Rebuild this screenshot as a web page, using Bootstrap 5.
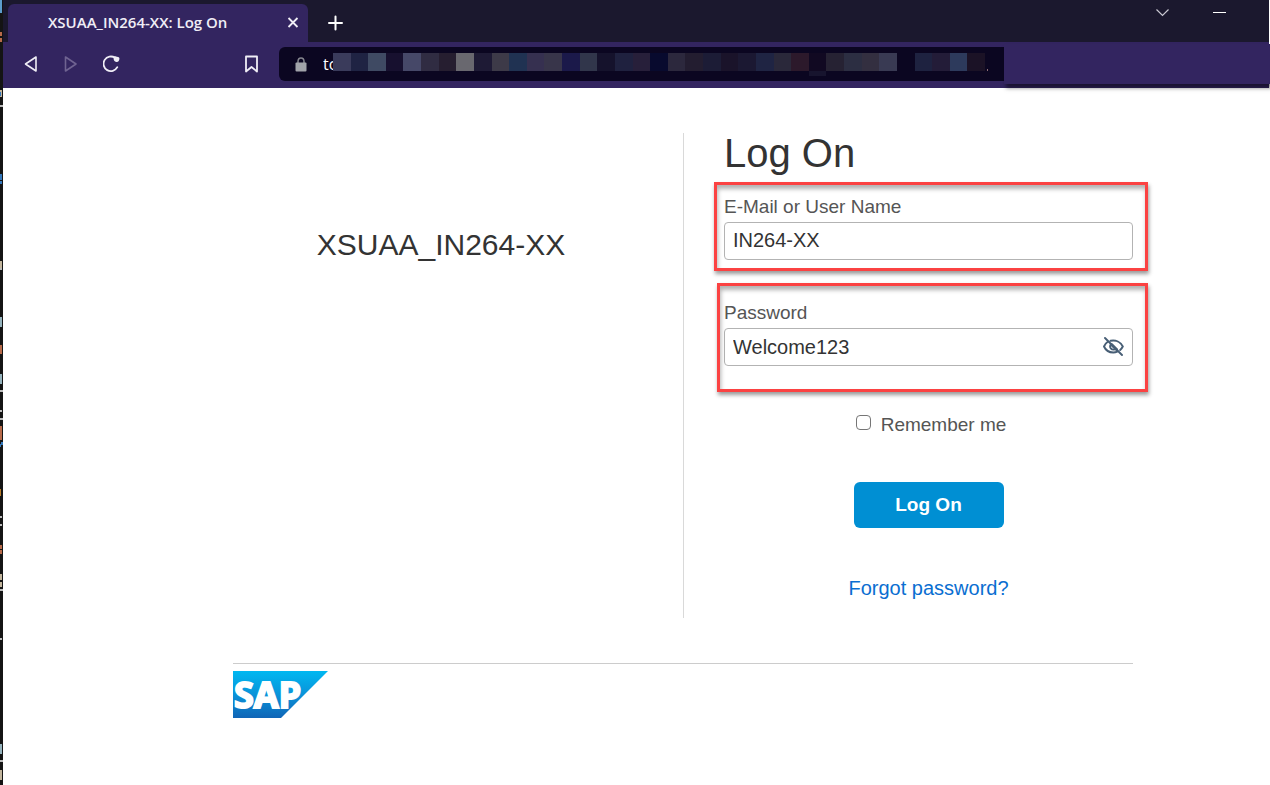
<!DOCTYPE html>
<html lang="en">
<head>
<meta charset="utf-8">
<meta name="viewport" content="width=device-width, initial-scale=1">
<title>XSUAA_IN264-XX: Log On</title>
<link rel="stylesheet" href="https://cdn.jsdelivr.net/npm/bootstrap@5.3.0/dist/css/bootstrap.min.css">
<style>
  body { font-family: "Liberation Sans", Arial, sans-serif; color: #333; background: #fff; }
  .editor-edge { width: 3px; background: #141414; }
  .editor-edge svg { display: block; }
  .browser-head { margin-right: 1px; }
  .tab-strip { height: 42px; background: #1b182e; padding-left: 5px; }
  .tab-item { width: 300px; height: 38px; background: #332560; color: #f0eef6; border-radius: 6px 6px 0 0;
    padding: 0 8px 2px 40px; font: 600 15px "Open Sans", "Noto Sans", sans-serif; }
  .icon-btn { border: 0; padding: 0; background: none; color: #f0eef6; display: block; line-height: 0; }
  .tool-strip { height: 46px; background: #332560; padding: 0 0 2px 20px; }
  .address { height: 34px; background: #0b0621; border-radius: 6px 0 0 6px; padding-left: 16px; padding-right: 19px; }
  .address input { width: 10px; border: 0; padding: 0; background: none; color: #fff; outline: 0;
    font: 16px "Open Sans", "Noto Sans", sans-serif; }
  .mosaic { height: 18px; margin-top: -4px; }
  .cover { width: 266px; height: 40px; margin-right: -1px; background: #332560; box-shadow: 2px 4px 4px rgba(0,0,0,.5); }
  .logon-page { padding: 45px 137px 0 230px; }
  .brand-side { padding-top: 92px; padding-right: 34px; }
  .brand-side h2 { font-size: 30px; line-height: 40px; }
  .form-side { border-left: 1px solid #d9d9d9; padding-left: 40px; padding-bottom: 18px; }
  .form-side h1 { font-size: 40px; line-height: 40px; margin-bottom: 21px; }
  .form-side label { font-size: 19px; line-height: 26px; color: #555; display: block; }
  .marked label { margin-bottom: 2px; }
  .entry { height: 38px; font-size: 20px; line-height: 24px; color: #333; border: 1px solid #b3b3b3; border-radius: 4px; padding: 0 8px 2px; }
  .entry-2 { padding-bottom: 0; }
  .marked::after { content: ""; position: absolute; border: 3px solid #fb4242; pointer-events: none;
    box-shadow: 1px 3px 4px rgba(0,0,0,.4), inset 1px 4px 4px rgba(0,0,0,.3); }
  .mark-user::after { inset: -12px -15px -11px -10px; }
  .mark-pass { margin-top: 40px; }
  .mark-pass::after { inset: -17px -15px -26px -7px; }
  .eye { right: 9px; bottom: 9px; color: #475e75; }
  .remember { margin: 46px 0 44px; padding-left: 5px; gap: 10px; }
  .remember input { width: 15px; height: 15px; margin: 0 0 6px; border: 1px solid #767676; border-radius: 3px; }
  .logon-btn { width: 150px; height: 46px; border: 0; border-radius: 6px; background: #008fd3; color: #fff; font-size: 19px; line-height: 24px; }
  .forgot { margin-top: 48px; font-size: 20px; line-height: 24px; color: #0a6ed1; }
  .logon-foot { margin-top: 45px; border-top: 1px solid #ccc; padding-top: 7px; }
</style>
</head>
<body>
<div class="d-flex min-vh-100">
  <div class="editor-edge flex-shrink-0" aria-hidden="true">
    <svg width="3" height="785" viewBox="0 0 3 785">
      <path fill="#5c9dcc" d="M0 0h2v13H0z"/>
      <path fill="#b76a4a" d="M0 32h2v4H0zM0 38h2v4H0zM0 345h2v9H0zM0 426h2v14H0zM0 545h2v4H0zM0 550h2v4H0z"/>
      <path fill="#c2b59d" d="M0 90h2v7H0zM0 261h2v8H0zM0 574h2v6H0zM0 582h2v5H0zM0 770h2v10H0z"/>
      <path fill="#3478bc" d="M0 92h1v4H0zM0 174h2v6H0zM0 181h2v3H0zM0 444h1v3H0zM1 442h2v3H1z"/>
      <path fill="#95b3bd" d="M0 317h2v10H0zM0 374h2v10H0zM0 744h2v10H0z"/>
      <path fill="#b67a27" d="M0 489h1v7H0z"/>
      <path fill="#bbb" d="M0 105h3v2H0zM0 268h2v2H0zM0 390h3v2H0zM0 410h2v2H0zM0 418h3v2H0zM0 516h2v2H0zM0 524h2v2H0zM0 589h3v2H0zM0 638h2v2H0zM0 760h3v2H0z"/>
    </svg>
  </div>

  <div class="flex-grow-1">
    <header class="browser-head">
      <div class="tab-strip d-flex align-items-end">
        <div class="tab-item d-flex align-items-center justify-content-between">
          <span>XSUAA_IN264-XX: Log On</span>
          <button class="icon-btn" type="button" aria-label="Close tab"><svg width="14" height="14" fill="none" stroke="currentColor" stroke-width="1.800"><path d="M2.500 3l9 9M11.500 3l-9 9"/></svg></button>
        </div>
        <button class="icon-btn ms-3 mb-2 ps-1" type="button" aria-label="New tab"><svg width="16" height="22" fill="none" stroke="#fff" stroke-width="2" stroke-linecap="round"><path d="M1 11h13M7.500 4.500v13"/></svg></button>
        <div class="d-flex ms-auto align-self-start pt-1">
          <button class="icon-btn" type="button" aria-label="Show tabs"><svg width="58" height="18" fill="none" stroke="#cac8d2" stroke-width="1.200"><path d="M1.500 5.500l6 6 6-6"/></svg></button>
          <button class="icon-btn" type="button" aria-label="Minimize"><svg width="56" height="18"><path fill="#fff" d="M0 8h13v1H0z"/></svg></button>
        </div>
      </div>
      <div class="tool-strip d-flex align-items-center">
        <button class="icon-btn" type="button" aria-label="Back"><svg width="16" height="20" fill="none" stroke="currentColor" stroke-width="1.600" stroke-linejoin="round"><path d="M13 3v14L2.500 10z"/></svg></button>
        <button class="icon-btn ms-4" type="button" aria-label="Forward"><svg width="16" height="20" fill="none" stroke="#6f6391" stroke-width="1.600" stroke-linejoin="round"><path d="M2.500 3v14L13 10z"/></svg></button>
        <button class="icon-btn ms-4" type="button" aria-label="Reload"><svg width="129" height="20" fill="none" stroke="currentColor" stroke-width="1.800" stroke-linecap="round"><path d="M12 3.800A7.300 7.300 0 1 0 14.300 13.200"/><path fill="currentColor" stroke="none" d="M10.600 4.200c0-1.700 1-2.200 2.400-1.700l2 .4c1.200.2 1.600 1 1.400 2.200-.3 2.200-1.500 3.300-3.100 2.900-1.800-.4-2.700-1.700-2.700-3.800z"/></svg></button>
        <button class="icon-btn ms-2 ps-1" type="button" aria-label="Bookmark"><svg width="35" height="20" fill="none" stroke="currentColor" stroke-width="1.800" stroke-linejoin="round"><path d="M2 2.500h11V17.500l-5.500-4.500L2 17.500z"/></svg></button>
        <div class="address flex-grow-1 d-flex align-items-center">
          <svg class="me-3 flex-shrink-0" width="12" height="15" aria-hidden="true"><path fill="none" stroke="#85868e" stroke-width="1.500" d="M3 6V4.500a3 3.500 0 0 1 6 0V6"/><rect x=".5" y="5.500" width="11" height="9" rx="1" fill="#a1a3aa"/></svg>
          <input type="text" value="to" aria-label="Address">
          <svg class="mosaic flex-grow-1" viewBox="0 0 37 18" preserveAspectRatio="none" overflow="visible" shape-rendering="crispEdges" aria-hidden="true">
            <path fill="#3a3b5b" d="M0 0h1v18H0z"/><path fill="#1f2343" d="M1 0h1v18H1z"/><path fill="#3f4a63" d="M2 0h1v18H2z"/><path fill="#17102f" d="M3 0h1v18H3z"/><path fill="#464868" d="M4 0h1v18H4z"/><path fill="#302c42" d="M5 0h1v18H5z"/><path fill="#261e30" d="M6 0h1v18H6z"/><path fill="#69686f" d="M7 0h1v18H7z"/><path fill="#1e1a35" d="M8 0h1v18H8z"/><path fill="#3d3a48" d="M9 0h1v18H9z"/><path fill="#203252" d="M10 0h1v18h-1z"/><path fill="#363050" d="M11 0h1v18h-1z"/><path fill="#38354a" d="M12 0h1v18h-1z"/><path fill="#1b194a" d="M13 0h1v18h-1z"/><path fill="#31364b" d="M14 0h1v18h-1z"/><path fill="#15122c" d="M15 0h1v18h-1z"/><path fill="#1f213f" d="M16 0h1v18h-1z"/><path fill="#271f3a" d="M17 0h1v18h-1z"/><path fill="#080a2e" d="M18 0h1v18h-1z"/><path fill="#2c283d" d="M19 0h1v18h-1z"/><path fill="#231d30" d="M20 0h1v18h-1z"/><path fill="#1c1c36" d="M21 0h1v18h-1z"/><path fill="#1a132a" d="M22 0h1v18h-1z"/><path fill="#1b1832" d="M23 0h1v18h-1z"/><path fill="#1f2443" d="M24 0h1v18h-1z"/><path fill="#2a283a" d="M25 0h1v18h-1z"/><path fill="#2c192b" d="M26 0h1v18h-1z"/><path fill="#110922" d="M27 0h1v18h-1z"/><path fill="#17142e" d="M27 18h1v5h-1z"/><path fill="#262233" d="M28 0h1v18h-1z"/><path fill="#2c2e42" d="M29 0h1v18h-1z"/><path fill="#332f40" d="M30 0h1v18h-1z"/><path fill="#393a53" d="M31 0h1v18h-1z"/><path fill="#1e2240" d="M33 0h1v18h-1z"/><path fill="#231c38" d="M34 0h1v18h-1z"/><path fill="#2d3a5c" d="M35 0h1v18h-1z"/><path fill="#1b1226" d="M36 0h1v18h-1z"/><path fill="#8f6e75" d="M37.120 16h.060v2h-.060z"/>
          </svg>
        </div>
        <div class="cover flex-shrink-0"></div>
      </div>
    </header>

    <main class="logon-page">
      <div class="row g-0">
        <div class="col-6 brand-side text-center"><h2 class="fw-normal mb-0">XSUAA_IN264-XX</h2></div>
        <form class="col-6 form-side">
          <h1 class="fw-normal">Log On</h1>
          <div class="position-relative marked mark-user">
            <label for="user">E-Mail or User Name</label>
            <input class="entry d-block w-100" id="user" type="text" value="IN264-XX">
          </div>
          <div class="position-relative marked mark-pass">
            <label for="pass">Password</label>
            <input class="entry entry-2 d-block w-100" id="pass" type="text" value="Welcome123">
            <button class="icon-btn eye position-absolute" type="button" aria-label="Hide password">
              <svg width="21" height="21" fill="none" stroke="currentColor" stroke-width="1.900" stroke-linecap="round"><path d="M4.800 5.800C3.200 6.800 1.900 8.500 1 10.500c1.800 4 5.200 6 9.300 6 1.500 0 2.800-.3 4-.8M7.600 4.800c5.200-1 10 1.200 12.200 5.700-.7 1.400-1.500 2.500-2.600 3.500M7.400 9c-1 2.800.8 4.800 3.600 4.600M2 2l17 17"/><path d="M8.500 8.500l5 5" stroke-width="3"/></svg>
            </button>
          </div>
          <div class="remember d-flex justify-content-center align-items-center">
            <input class="form-check-input" id="remember" type="checkbox">
            <label for="remember">Remember me</label>
          </div>
          <div class="text-center">
            <button class="logon-btn fw-bold" type="button">Log On</button>
          </div>
          <div class="forgot text-center"><a class="text-decoration-none text-reset" href="#">Forgot password?</a></div>
        </form>
      </div>
      <footer class="logon-foot">
        <svg class="d-block" width="95" height="47" overflow="visible" role="img" aria-label="SAP">
          <defs><linearGradient id="blue" x1="0" y1="0" x2="0" y2="1"><stop offset="0" stop-color="#00b8f1"/><stop offset=".5" stop-color="#0a93d9"/><stop offset="1" stop-color="#1065b6"/></linearGradient></defs>
          <path fill="url(#blue)" d="M0 0h95L48 47H0z"/>
          <text x="1" y="37" font-family="Noto Sans, Open Sans, sans-serif" font-weight="700" font-size="36" fill="#fff" stroke="#fff" stroke-width="2">SAP</text>
        </svg>
      </footer>
    </main>
  </div>
</div>
<script src="https://cdn.jsdelivr.net/npm/bootstrap@5.3.0/dist/js/bootstrap.bundle.min.js"></script>
</body>
</html>
